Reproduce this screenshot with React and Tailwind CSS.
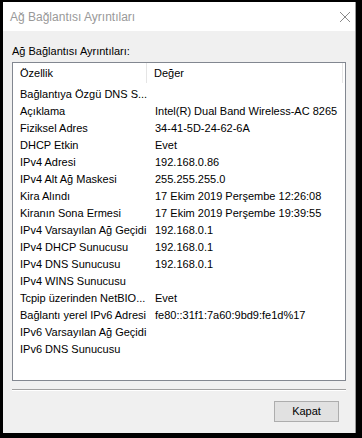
const rows = [
  ['Bağlantıya Özgü DNS S...', ''],
  ['Açıklama', 'Intel(R) Dual Band Wireless-AC 8265'],
  ['Fiziksel Adres', '34-41-5D-24-62-6A'],
  ['DHCP Etkin', 'Evet'],
  ['IPv4 Adresi', '192.168.0.86'],
  ['IPv4 Alt Ağ Maskesi', '255.255.255.0'],
  ['Kira Alındı', '17 Ekim 2019 Perşembe 12:26:08'],
  ['Kiranın Sona Ermesi', '17 Ekim 2019 Perşembe 19:39:55'],
  ['IPv4 Varsayılan Ağ Geçidi', '192.168.0.1'],
  ['IPv4 DHCP Sunucusu', '192.168.0.1'],
  ['IPv4 DNS Sunucusu', '192.168.0.1'],
  ['IPv4 WINS Sunucusu', ''],
  ['Tcpip üzerinden NetBIO...', 'Evet'],
  ['Bağlantı yerel IPv6 Adresi', 'fe80::31f1:7a60:9bd9:fe1d%17'],
  ['IPv6 Varsayılan Ağ Geçidi', ''],
  ['IPv6 DNS Sunucusu', ''],
];

export default function App() {
  return (
    <div className="w-[362px] h-[438px] bg-black pt-[2px] pl-[3px] pr-[6px] pb-[5px] font-['Liberation_Sans',sans-serif] text-[11px] text-black">
      <div className="w-[353px] h-[431px] bg-[#f0f0f0] flex flex-col border-r border-[#9a9a9a]">
        {/* title bar */}
        <div className="h-[29px] bg-white flex items-center justify-between pl-[7px] pr-[4px] shrink-0">
          <span className="text-[12px] text-[#999999]">Ağ Bağlantısı Ayrıntıları</span>
          <svg width="12" height="12" viewBox="0 0 12 12">
            <path d="M1 1L11 11M11 1L1 11" stroke="#8a8a8a" strokeWidth="1" />
          </svg>
        </div>

        <div className="flex-1 flex flex-col px-[9px]">
          <div className="mt-[12px] h-[16px] leading-[16px]">Ağ Bağlantısı Ayrıntıları:</div>

          {/* list */}
          <div className="mt-[3px] h-[319px] bg-white border border-[#828790] flex flex-col">
            <div className="h-[20px] flex items-stretch shrink-0">
              <div className="w-[134px] pl-[7px] flex items-center border-r border-[#e5e5e5]">Özellik</div>
              <div className="flex-1 pl-[7px] flex items-center border-r border-[#e5e5e5] mr-[2px]">Değer</div>
            </div>
            <div className="mt-[3px] flex flex-col">
              {rows.map(([k, v], i) => (
                <div key={i} className="h-[17px] flex items-center leading-[17px]">
                  <div className="w-[135px] pl-[7px] whitespace-nowrap">{k}</div>
                  <div className="flex-1 pl-[7px] whitespace-nowrap">{v}</div>
                </div>
              ))}
            </div>
          </div>

          {/* separator */}
          <div className="mt-[8px] h-[2px] border-t border-[#a0a0a0] border-b border-b-white"></div>

          <div className="flex justify-end mt-[10px] pr-[7px]">
            <button className="w-[65px] h-[21px] bg-[#e1e1e1] border border-[#adadad] text-[11px] text-black flex items-center justify-center">
              Kapat
            </button>
          </div>
        </div>
      </div>
    </div>
  );
}
